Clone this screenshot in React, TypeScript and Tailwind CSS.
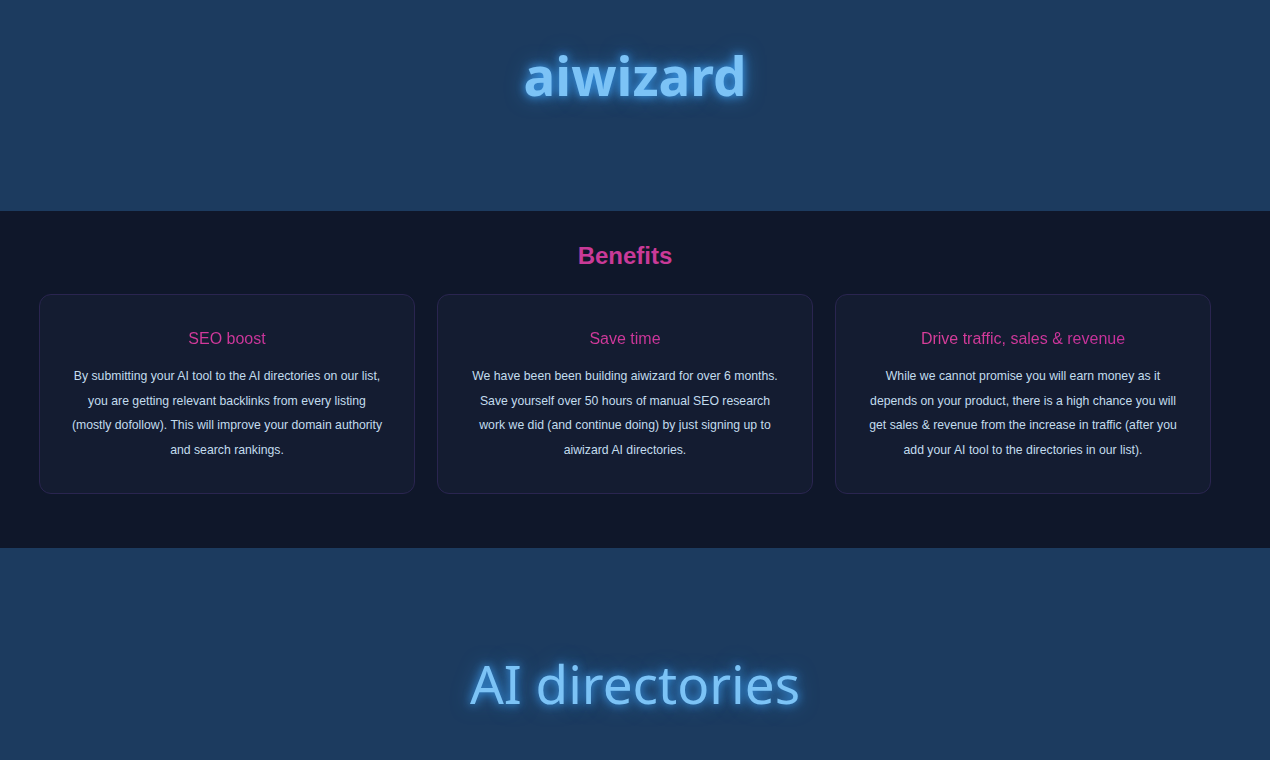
const benefits = [
  {
    title: "SEO boost",
    text: "By submitting your AI tool to the AI directories on our list, you are getting relevant backlinks from every listing (mostly dofollow). This will improve your domain authority and search rankings.",
  },
  {
    title: "Save time",
    text: "We have been been building aiwizard for over 6 months. Save yourself over 50 hours of manual SEO research work we did (and continue doing) by just signing up to aiwizard AI directories.",
  },
  {
    title: "Drive traffic, sales & revenue",
    text: "While we cannot promise you will earn money as it depends on your product, there is a high chance you will get sales & revenue from the increase in traffic (after you add your AI tool to the directories in our list).",
  },
];

export default function App() {
  return (
    <main className="min-h-screen bg-[#1c3b5f]">
      <header className="flex h-[211px] justify-center pt-[44px]">
        <h1 className="font-['Noto_Sans','Open_Sans',sans-serif] text-[53px] font-bold leading-[1.2] text-[#7cc3f6] [text-shadow:0_0_10px_#3b9cf0,0_0_20px_rgba(59,156,240,0.6)]">
          aiwizard
        </h1>
      </header>

      <section className="bg-[#0f172a] pb-[54px] pl-[39px] pr-[59px] pt-[30px] font-['Liberation_Sans',Arial,sans-serif]">
        <h2 className="text-center text-[24px] font-bold leading-[30px] text-[#c93a98]">
          Benefits
        </h2>
        <div className="mt-[23px] grid grid-cols-3 gap-[22px]">
          {benefits.map((item) => (
            <div
              key={item.title}
              className="h-[200px] rounded-[12px] border border-[#2a2550] bg-[#141c31] px-[29px] pt-[34px] text-center"
            >
              <h3 className="bg-gradient-to-r from-[#e0429a] to-[#c02b9c] bg-clip-text text-[16px] leading-[20px] text-transparent">
                {item.title}
              </h3>
              <p className="mt-[15px] text-[12.25px] leading-[24.5px] text-[#c3dcee]">
                {item.text}
              </p>
            </div>
          ))}
        </div>
      </section>

      <section className="flex justify-center pt-[104px] pb-[40px]">
        <h2 className="font-['Noto_Sans','Open_Sans',sans-serif] text-[53px] font-normal leading-[1.2] text-[#7cc3f6] [text-shadow:0_0_10px_#3b9cf0,0_0_20px_rgba(59,156,240,0.6)]">
          AI directories
        </h2>
      </section>
    </main>
  );
}
